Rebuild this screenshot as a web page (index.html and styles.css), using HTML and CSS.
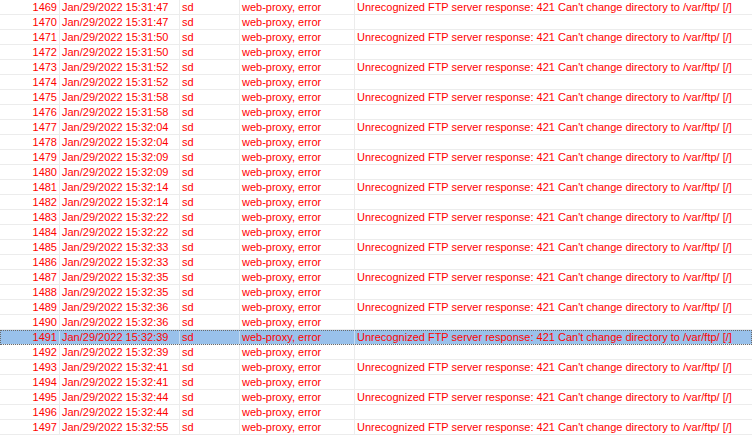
FILE: index.html
```html
<!DOCTYPE html>
<html>
<head>
<meta charset="utf-8">
<link rel="stylesheet" href="styles.css">
</head>
<body>
<div class="log" id="log"></div>
<script src="app.js"></script>
</body>
</html>
```
FILE: styles.css
```css
html, body {
  margin: 0;
  padding: 0;
  background: #ffffff;
  overflow: hidden;
}
.log {
  width: 752px;
  font-family: "Liberation Sans", Arial, sans-serif;
  font-size: 11px;
  color: #ff0000;
}
.row {
  display: grid;
  grid-template-columns: 60px 120px 60px 115px 1fr;
  height: 15px;
  box-sizing: border-box;
  border-bottom: 1px solid #ececec;
}
.cell {
  border-right: 1px solid #ececec;
  line-height: 14px;
  height: 14px;
  white-space: nowrap;
  overflow: hidden;
  padding-left: 2px;
}
.cell:last-child {
  border-right: none;
}
.num {
  text-align: right;
  padding-left: 0;
  padding-right: 2px;
}
.row.sel {
  background: #99c1eb;
  outline: 1px dotted #6a6a6a;
  outline-offset: -1px;
}
.row.sel .cell {
  border-right-color: #c5dbf2;
}
```
FILE: app.js
```js
const times = ["15:31:47","15:31:47","15:31:50","15:31:50","15:31:52","15:31:52","15:31:58","15:31:58","15:32:04","15:32:04","15:32:09","15:32:09","15:32:14","15:32:14","15:32:22","15:32:22","15:32:33","15:32:33","15:32:35","15:32:35","15:32:36","15:32:36","15:32:39","15:32:39","15:32:41","15:32:41","15:32:44","15:32:44","15:32:55"];
const log = document.getElementById("log");
times.forEach((t, i) => {
  const n = 1469 + i;
  const row = document.createElement("div");
  row.className = "row" + (n === 1491 ? " sel" : "");
  const msg = (n % 2 === 1) ? "Unrecognized FTP server response: 421 Can't change directory to /var/ftp/ [/]" : "";
  const cells = [[String(n), "num"], ["Jan/29/2022 " + t, ""], ["sd", ""], ["web-proxy, error", ""], [msg, ""]];
  cells.forEach(([txt, cls]) => {
    const c = document.createElement("div");
    c.className = "cell" + (cls ? " " + cls : "");
    c.textContent = txt;
    row.appendChild(c);
  });
  log.appendChild(row);
});
```
